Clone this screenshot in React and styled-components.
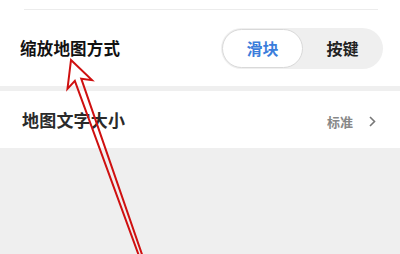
import React, { useState } from "react";
import styled, { createGlobalStyle } from "styled-components";

const GlobalStyle = createGlobalStyle`
  html, body {
    margin: 0;
    padding: 0;
    background: #efefef;
  }
  body {
    font-family: "Noto Sans CJK SC", "Noto Sans", sans-serif;
  }
`;

const Page = styled.div`
  position: relative;
  width: 400px;
  height: 254px;
  overflow: hidden;
  background: #efefef;
`;

const Section = styled.div`
  background: #fff;
  padding-top: ${(p) => p.$top || 0}px;
  margin-bottom: ${(p) => p.$gap || 0}px;
`;

const Divider = styled.div`
  height: 1px;
  background: #ececec;
  margin: 0 22px 0 24px;
`;

const Row = styled.div`
  display: flex;
  align-items: center;
  justify-content: space-between;
  height: ${(p) => p.$h}px;
  padding: 0 17px 0 20px;
`;

const Label = styled.span`
  font-size: ${(p) => p.$size || 16.5}px;
  font-weight: 700;
  color: ${(p) => p.$color || "#111"};
  letter-spacing: 0.2px;
  margin-left: ${(p) => p.$indent || 0}px;
`;

const Segmented = styled.div`
  display: flex;
  width: 162px;
  height: 41px;
  border-radius: 21px;
  background: #efefef;
  box-sizing: border-box;
  padding: 1px;
`;

const Segment = styled.button`
  flex: 1;
  border: ${(p) => (p.$active ? "1px solid #d9d9d9" : "none")};
  border-radius: 20px;
  background: ${(p) => (p.$active ? "#fff" : "transparent")};
  color: ${(p) => (p.$active ? "#3b7ddb" : "#222")};
  font-family: inherit;
  font-size: 16px;
  font-weight: 700;
  padding: 0;
  cursor: pointer;
`;

const Value = styled.div`
  display: flex;
  align-items: center;
  gap: 16px;
  color: #888;
  font-size: 13px;
  font-weight: 700;
  padding-right: 7px;
  margin-top: 3px;
`;

const Overlay = styled.svg`
  position: absolute;
  left: 0;
  top: 0;
  pointer-events: none;
`;

const App = () => {
  const [mode, setMode] = useState("slider");

  return (
    <>
      <GlobalStyle />
      <Page>
        <Section $top={9} $gap={5}>
          <Divider />
          <Row $h={76}>
            <Label>缩放地图方式</Label>
            <Segmented>
              <Segment $active={mode === "slider"} onClick={() => setMode("slider")}>
                滑块
              </Segment>
              <Segment $active={mode === "button"} onClick={() => setMode("button")}>
                按键
              </Segment>
            </Segmented>
          </Row>
        </Section>
        <Section>
          <Row $h={57}>
            <Label $size={17} $color="#2a2a2a" $indent={2}>
              地图文字大小
            </Label>
            <Value>
              标准
              <svg width="7" height="11" viewBox="0 0 7 11">
                <path d="M1 1 L5.5 5.5 L1 10" fill="none" stroke="#777" strokeWidth="1.6" />
              </svg>
            </Value>
          </Row>
        </Section>

        <Overlay width="400" height="254" viewBox="0 0 400 254">
          <g transform="translate(71 60) rotate(-19.6)">
            <path
              d="M0 0 L13 26 L3.4 21 L1.6 215 L-1.6 215 L-3.4 21 L-13 26 Z"
              fill="none"
              stroke="#cf1010"
              strokeWidth="2"
              strokeLinejoin="miter"
            />
          </g>
        </Overlay>
      </Page>
    </>
  );
};

export default App;
